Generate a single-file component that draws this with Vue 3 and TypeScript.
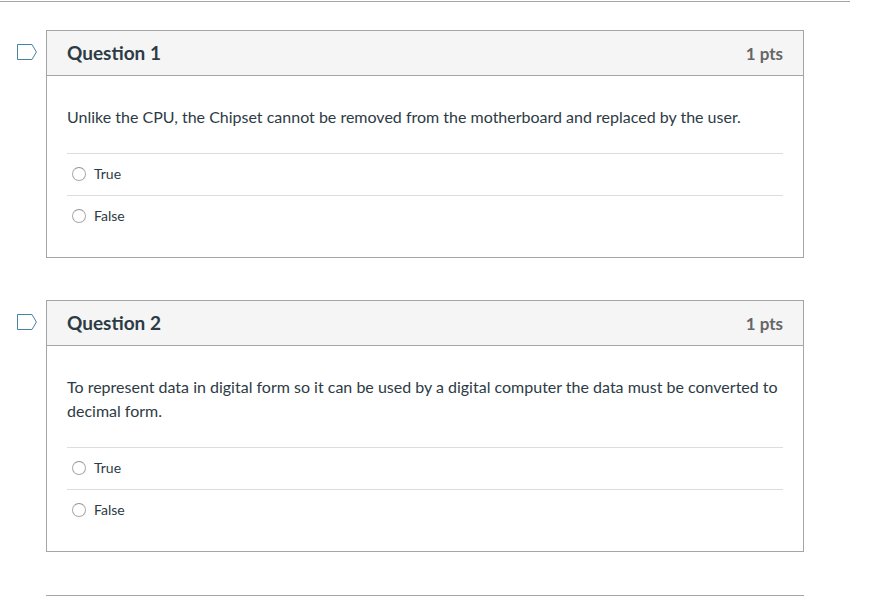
<script setup lang="ts">
interface Question {
  id: number
  points: number
  text: string
}

const questions: Question[] = [
  {
    id: 1,
    points: 1,
    text: 'Unlike the CPU, the Chipset cannot be removed from the motherboard and replaced by the user.',
  },
  {
    id: 2,
    points: 1,
    text: 'To represent data in digital form so it can be used by a digital computer the data must be converted to decimal form.',
  },
]
const answers: string[] = ['True', 'False']
</script>

<template>
  <main class="quiz">
    <section v-for="q in questions" :key="q.id" class="row">
      <button class="flag" type="button" :aria-label="`Flag question ${q.id}`">
        <svg width="22" height="18" viewBox="0 0 22 18" aria-hidden="true">
          <path d="M1.5 1.5H16L20.4 9L16 16.5H1.5Z" />
        </svg>
      </button>
      <article class="card">
        <header class="head">
          <h2 class="title">Question {{ q.id }}</h2>
          <span class="points">{{ q.points }} pts</span>
        </header>
        <div class="body">
          <p :id="`text-${q.id}`" class="text">{{ q.text }}</p>
          <div role="radiogroup" :aria-labelledby="`text-${q.id}`">
            <label v-for="a in answers" :key="a" class="answer">
              <input type="radio" :name="`question-${q.id}`" :value="a" />
              <span>{{ a }}</span>
            </label>
          </div>
        </div>
      </article>
    </section>
    <hr class="next" />
  </main>
</template>

<style>
body {
  background: #fff;
}
</style>

<style scoped>
.quiz {
  box-sizing: border-box;
  margin-right: 39px;
  padding: 28px 46px 0 16px;
  border-top: 1px solid #a5a5a5;
  margin-top: 1px;
  font-family: Lato, "Liberation Sans", sans-serif;
  color: #2d3b45;
}
.row {
  display: flex;
  align-items: flex-start;
  gap: 8px;
  margin-bottom: 42px;
}
.flag {
  flex: none;
  display: flex;
  margin: 13px 0 0;
  padding: 0;
  border: 0;
  background: none;
}
.flag path {
  fill: #fff;
  stroke: #4585a2;
  stroke-width: 1;
}
.card {
  flex: 1;
  min-width: 0;
  border: 1px solid #a5a5a5;
}
.head {
  box-sizing: border-box;
  display: flex;
  align-items: baseline;
  justify-content: space-between;
  height: 45px;
  padding: 10px 20px 0;
  border-bottom: 1px solid #a5a5a5;
  background: #f5f5f5;
}
.title {
  margin: 0;
  font-size: 19px;
  line-height: 24px;
  font-weight: 700;
}
.points {
  font-size: 17px;
  line-height: 24px;
  font-weight: 700;
  color: #666;
}
.body {
  padding: 29px 20px 20px;
}
.text {
  margin: 0 0 24px;
  font-size: 16px;
  line-height: 24px;
}
.answer {
  display: flex;
  align-items: center;
  gap: 8px;
  height: 40px;
  padding: 0 0 1px 5px;
  border-top: 1px solid #ddd;
  font-size: 14px;
  line-height: 20px;
}
.answer input {
  appearance: none;
  box-sizing: border-box;
  width: 14px;
  height: 14px;
  margin: 0;
  border: 1px solid #aaa;
  border-top-color: #949494;
  border-radius: 50%;
  background: #fff;
}
.answer input:checked {
  border: 4px solid #2d7a9c;
}
.next {
  margin: 43px 0 0 30px;
  border: 0;
  border-top: 1px solid #a5a5a5;
}
</style>
